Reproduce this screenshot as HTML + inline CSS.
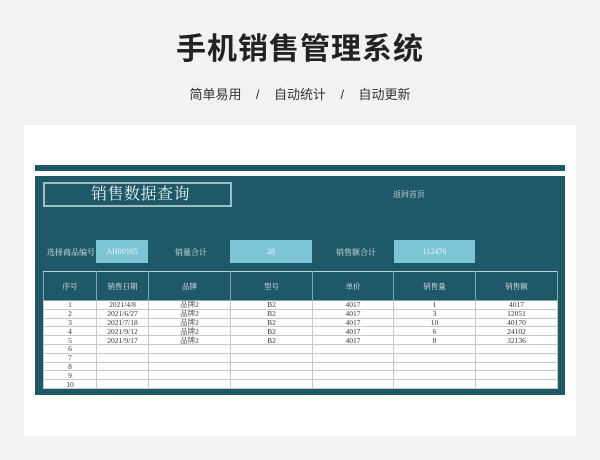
<!DOCTYPE html>
<html><head><meta charset="utf-8"><style>
body{margin:0;width:600px;height:460px;background:#f2f2f2;font-family:"Liberation Serif","Noto Serif CJK SC",serif;position:relative;overflow:hidden}
.a{position:absolute}
h1{position:absolute;left:0;width:600px;top:24px;margin:0;text-align:center;font:bold 30px "Liberation Sans","Noto Sans CJK SC",sans-serif;color:#222;letter-spacing:1px}
.sub{top:84px;left:0;width:600px;text-align:center;font:13px "Liberation Sans","Noto Sans CJK SC",sans-serif;color:#333}
.card{left:24px;top:125px;width:552px;height:311px;background:#fff}
.panel{left:35px;top:165px;width:530px;height:230px;background:#1f5866}
.box{background:#7cc5d6;color:#e8f6fa;font-size:8px;text-align:center;line-height:23px;height:23px}
.lbl{color:#dfe9ec;font-size:8px}
table{border-collapse:collapse;table-layout:fixed;position:absolute;left:43px;top:271px;width:514px;font-size:7.5px}
th{height:28px;color:#dfe9ec;font-weight:normal;border:1px solid #7fa8b2;border-top:1px solid #b8d4da;padding:0}
tr.d{height:8.8px}
td{height:7.8px;line-height:7px;padding:0;background:#fff;border:1px solid #c8c8c8;text-align:center;color:#333;overflow:hidden}
</style></head><body>
<h1>手机销售管理系统</h1>
<div class="a sub">简单易用 &nbsp; &nbsp;/&nbsp; &nbsp; 自动统计 &nbsp; &nbsp;/&nbsp; &nbsp; 自动更新</div>
<div class="a card"></div>
<div class="a panel"></div>
<div class="a" style="left:35px;top:171px;width:530px;height:5px;background:#fff"></div>
<div class="a" style="left:43px;top:182px;width:139px;height:21px;border:2px solid #9bbfc7;color:#e6f0f2;font-size:16px;line-height:21px;padding-left:46px;letter-spacing:0.5px">销售数据查询</div>
<div class="a lbl" style="left:393px;top:189px">返回首页</div>
<div class="a lbl" style="left:47px;top:247px">选择商品编号</div>
<div class="a box" style="left:96px;top:240px;width:52px">AH00165</div>
<div class="a lbl" style="left:175px;top:247px">销量合计</div>
<div class="a box" style="left:230px;top:240px;width:82px">28</div>
<div class="a lbl" style="left:336px;top:247px">销售额合计</div>
<div class="a box" style="left:394px;top:240px;width:81px">112476</div>
<table>
<colgroup><col style="width:53px"><col style="width:52px"><col style="width:82px"><col style="width:82px"><col style="width:81px"><col style="width:82px"><col style="width:82px"></colgroup>
<tr><th>序号</th><th>销售日期</th><th>品牌</th><th>型号</th><th>单价</th><th>销售量</th><th>销售额</th></tr>
<tr class="d"><td>1</td><td>2021/4/8</td><td>品牌2</td><td>B2</td><td>4017</td><td>1</td><td>4017</td></tr>
<tr class="d"><td>2</td><td>2021/6/27</td><td>品牌2</td><td>B2</td><td>4017</td><td>3</td><td>12051</td></tr>
<tr class="d"><td>3</td><td>2021/7/18</td><td>品牌2</td><td>B2</td><td>4017</td><td>10</td><td>40170</td></tr>
<tr class="d"><td>4</td><td>2021/9/12</td><td>品牌2</td><td>B2</td><td>4017</td><td>6</td><td>24102</td></tr>
<tr class="d"><td>5</td><td>2021/9/17</td><td>品牌2</td><td>B2</td><td>4017</td><td>8</td><td>32136</td></tr>
<tr class="d"><td>6</td><td></td><td></td><td></td><td></td><td></td><td></td></tr>
<tr class="d"><td>7</td><td></td><td></td><td></td><td></td><td></td><td></td></tr>
<tr class="d"><td>8</td><td></td><td></td><td></td><td></td><td></td><td></td></tr>
<tr class="d"><td>9</td><td></td><td></td><td></td><td></td><td></td><td></td></tr>
<tr class="d"><td>10</td><td></td><td></td><td></td><td></td><td></td><td></td></tr>
</table>
</body></html>
